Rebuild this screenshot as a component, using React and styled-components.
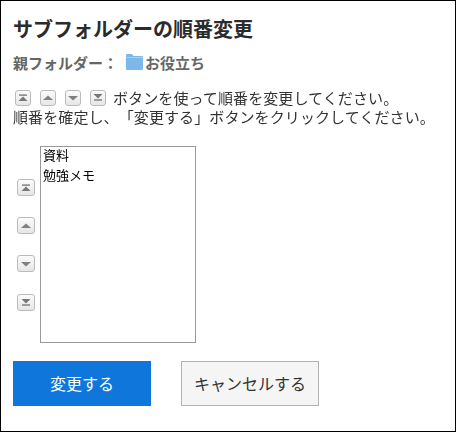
import React from "react";
import styled, { createGlobalStyle } from "styled-components";

const Global = createGlobalStyle`
  html, body { margin: 0; padding: 0; background: #fff; }
  body { font-family: "Noto Sans CJK JP", "Liberation Sans", sans-serif; color: #333; text-spacing-trim: space-all; }
`;
const Frame = styled.div`
  box-sizing: border-box;
  width: 456px;
  height: 432px;
  border: 1px solid #000;
  padding: 14px 12px 0;
  background: #fff;
`;
const Title = styled.h1`
  margin: 0;
  font-size: 20px;
  line-height: 28px;
  font-weight: 700;
  color: #2b2b2b;
`;
const Parent = styled.div`
  display: flex;
  align-items: center;
  margin-top: 9px;
  height: 20px;
  font-size: 15px;
  font-weight: 700;
  color: #666;
`;
const ParentLabel = styled.span`
  margin-right: 8px;
`;
const Help = styled.div`
  margin-top: 16px;
  font-size: 15px;
  line-height: 19px;
  letter-spacing: 0.1px;
  color: #333;
  will-change: transform;
`;
const HelpLine = styled.div`
  display: flex;
  align-items: center;
  height: 19px;
  white-space: nowrap;
`;
const HelpIcons = styled.span`
  display: flex;
  gap: 9px;
  margin: 0 7px 0 2px;
`;
const Editor = styled.div`
  display: flex;
  margin-top: 20px;
  margin-left: 4px;
`;
const Side = styled.div`
  display: flex;
  flex-direction: column;
  gap: 21px;
  padding-top: 33px;
  width: 23px;
  & > :last-child {
    margin-top: 1px;
  }
`;
const List = styled.div`
  box-sizing: border-box;
  width: 156px;
  height: 197px;
  border: 1px solid #999;
  padding: 0 2px;
  font-size: 13px;
  line-height: 16px;
  color: #000;
  will-change: transform;
`;
const ListItem = styled.div`
  height: 20px;
`;
const Actions = styled.div`
  display: flex;
  gap: 30px;
  margin-top: 18px;
`;
const Action = styled.button`
  box-sizing: border-box;
  width: 138px;
  height: 45px;
  padding: 0 0 2px;
  font-family: inherit;
  font-size: 16px;
  border: ${p => (p.$primary ? "0" : "1px solid #b3b3b3")};
  background: ${p => (p.$primary ? "#0f76dc" : "#f5f5f5")};
  color: ${p => (p.$primary ? "#fff" : "#333")};
`;
const ArrowBox = styled.span`
  box-sizing: border-box;
  display: flex;
  align-items: center;
  justify-content: center;
  width: ${p => (p.$small ? 16 : 18)}px;
  height: ${p => (p.$small ? 16 : 17)}px;
  border: 1px solid #bbb;
  border-radius: 3px;
  background: linear-gradient(#fbfbfb, #e6e6e6);
`;
const Folder = styled.svg`
  display: block;
  width: 17px;
  height: 16px;
  margin-right: 2px;
`;

const glyphs = {
  top: <><path d="M2 1.5h8v1.2H2z" fill="#666" /><path d="M6 3.5l4.5 4.5h-9z" fill="#777" /></>,
  up: <path d="M6 2.5l5 4.5H1z" fill="#808080" />,
  down: <path d="M1 3h10L6 7.5z" fill="#808080" />,
  bottom: <><path d="M1.5 1h9L6 5.5z" fill="#777" /><path d="M2 6.4h8v1.2H2z" fill="#666" /></>,
};

const Arrow = ({ type, small }) => (
  <ArrowBox $small={small}>
    <svg width="12" height="9" viewBox="0 0 12 9">{glyphs[type]}</svg>
  </ArrowBox>
);

const order = ["top", "up", "down", "bottom"];

export default function App() {
  return (
    <Frame>
      <Global />
      <Title>サブフォルダーの順番変更</Title>
      <Parent>
        <ParentLabel>親フォルダー：</ParentLabel>
        <Folder viewBox="0 0 17 16">
          <path d="M0 1A1 1 0 0 1 1 0h5l1.5 2H16a1 1 0 0 1 1 1v12a1 1 0 0 1-1 1H1a1 1 0 0 1-1-1z" fill="#7db8ea" />
          <path d="M0 3h17v1H0z" fill="#a5cff2" />
        </Folder>
        <span>お役立ち</span>
      </Parent>
      <Help>
        <HelpLine>
          <HelpIcons>{order.map(t => <Arrow key={t} type={t} small />)}</HelpIcons>
          ボタンを使って順番を変更してください。
        </HelpLine>
        <HelpLine>順番を確定し、「変更する」ボタンをクリックしてください。</HelpLine>
      </Help>
      <Editor>
        <Side>{order.map(t => <Arrow key={t} type={t} />)}</Side>
        <List>
          <ListItem>資料</ListItem>
          <ListItem>勉強メモ</ListItem>
        </List>
      </Editor>
      <Actions>
        <Action $primary>変更する</Action>
        <Action>キャンセルする</Action>
      </Actions>
    </Frame>
  );
}
